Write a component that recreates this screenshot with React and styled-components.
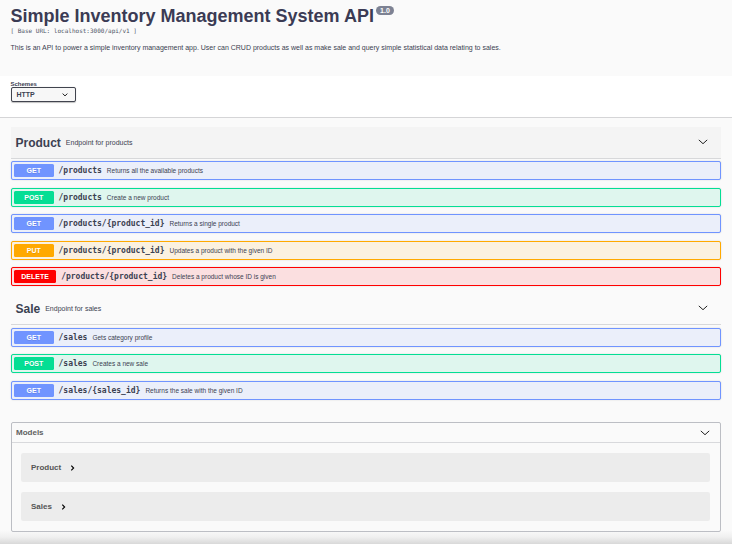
import React from "react";
import styled, { createGlobalStyle } from "styled-components";

const GlobalStyle = createGlobalStyle`
  * { box-sizing: border-box; }
  html, body { margin: 0; padding: 0; background: #fafafa; }
  body {
    font-family: "Liberation Sans", Arial, sans-serif;
    color: #3b4151;
    overflow: hidden;
  }
`;

const MONO = '"DejaVu Sans Mono", monospace';

const METHOD = {
  GET: { main: "#7094ff", fill: "#ebeffa" },
  POST: { main: "#04de94", fill: "#dff6ee" },
  PUT: { main: "#ffa900", fill: "#fbf1e0" },
  DELETE: { main: "#ff0000", fill: "#fbdfe0" },
};

const Page = styled.div`
  width: 732px;
  height: 544px;
  display: flex;
  flex-direction: column;
  overflow: hidden;
  background: linear-gradient(to bottom, #fafafa 530px, #f0f0f0 537px, #d8d8d8 544px);
`;

const Info = styled.header`
  height: 76px;
  padding: 6px 10.5px 0;
`;

const Title = styled.h1`
  display: flex;
  align-items: flex-start;
  margin: 0;
  font-size: 18px;
  line-height: 21px;
  font-weight: 700;
  color: #3b3b54;
  white-space: nowrap;
`;

const Version = styled.span`
  margin: 0 0 0 2px;
  width: 18px;
  height: 9px;
  border-radius: 5px;
  background: #7d8293;
  color: #fff;
  font-size: 7px;
  line-height: 9px;
  text-align: center;
`;

const BaseUrl = styled.div`
  font: 6px/8px ${MONO};
  color: #4f5566;
  white-space: pre;
`;

const Description = styled.p`
  margin: 8px 0 0;
  font-size: 7px;
  line-height: 9px;
`;

const SchemeBar = styled.section`
  height: 42px;
  padding: 5px 10.5px 0;
  background: #fff;
  border-bottom: 1px solid #d5d5d7;
`;

const SchemeLabel = styled.div`
  font-size: 6px;
  line-height: 6px;
  font-weight: 700;
`;

const SchemeSelect = styled.div`
  width: 65px;
  height: 15px;
  padding: 0 7px 0 5px;
  display: flex;
  align-items: center;
  justify-content: space-between;
  border: 1px solid #41444e;
  border-radius: 2px;
  background: #f7f7f7;
  box-shadow: 0 0.5px 1px rgba(0, 0, 0, 0.25);
  font-size: 7px;
  font-weight: 700;
`;

const TagGroup = styled.section`
  margin: ${(p) => p.$top}px 11px 0;
`;

const TagHeader = styled.div`
  height: 32px;
  display: flex;
  align-items: center;
  padding: 0 13px 0 4.5px;
  background: ${(p) => (p.$active ? "#f4f4f4" : "transparent")};
  border-bottom: 1px solid #d7d8da;
`;

const TagName = styled.h2`
  margin: 0;
  font-size: 12px;
  line-height: 14px;
`;

const TagNote = styled.span`
  flex: 1;
  padding-left: 5px;
  font-size: 7px;
`;

const Operations = styled.div`
  display: grid;
  padding-top: ${(p) => p.$top}px;
`;

const Operation = styled.div`
  height: 19px;
  display: flex;
  align-items: center;
  margin-bottom: ${(p) => p.$gap}px;
  padding: 0 2px;
  border: 1px solid ${(p) => METHOD[p.$method].main};
  border-radius: 2px;
  background: ${(p) => METHOD[p.$method].fill};
  box-shadow: 0 0 1.5px rgba(0, 0, 0, 0.19);
`;

const Method = styled.span`
  min-width: 39.5px;
  height: 13px;
  padding: 0 7.25px;
  border-radius: 1.5px;
  background: ${(p) => METHOD[p.$method].main};
  color: #fff;
  font-size: 7px;
  line-height: 13px;
  font-weight: 700;
  text-align: center;
  text-shadow: 0 0.5px 0 rgba(0, 0, 0, 0.1);
`;

const Path = styled.span`
  padding: 0 5px;
  font: 700 8px/10px ${MONO};
`;

const Summary = styled.span`
  font-size: 6.5px;
  line-height: 8px;
`;

const Models = styled.section`
  height: 110px;
  margin: 22px 11px 0;
  border: 1px solid #bcbec4;
  border-radius: 2px;
`;

const ModelsHeader = styled.div`
  height: 20px;
  display: flex;
  align-items: center;
  justify-content: space-between;
  padding: 0 10px 0 4px;
  border-bottom: 1px solid #d8d9dc;
  color: #606060;
  font-size: 8px;
  font-weight: 700;
`;

const ModelList = styled.div`
  display: flex;
  flex-direction: column;
  gap: 10px;
  padding: 10px 10px 0 9px;
`;

const Model = styled.div`
  height: 29px;
  display: flex;
  align-items: center;
  gap: 9px;
  padding-left: 10px;
  border-radius: 2px;
  background: #ececec;
  color: #555;
  font-size: 8px;
  font-weight: 700;
`;

const Icon = styled.svg`
  display: block;
  flex: none;
  margin: ${(p) => p.$margin || 0};
  fill: none;
  stroke: ${(p) => p.$color || "#222"};
  stroke-width: ${(p) => p.$weight || 1};
`;

const Chevron = ({ margin }) => (
  <Icon width="10" height="6" viewBox="0 0 10 6" $margin={margin}>
    <path d="M.8.9 5 4.7 9.2.9" />
  </Icon>
);

const SelectArrow = () => (
  <Icon width="6" height="4" viewBox="0 0 6 4" $margin="1px 0 0">
    <path d="M.6.6 3 2.9 5.4.6" />
  </Icon>
);

const ModelArrow = () => (
  <Icon width="5" height="6" viewBox="0 0 5 6" $color="#000" $weight={1.15} $margin="1px 0 0">
    <path d="M1.3 .7 3.6 3 1.3 5.3" />
  </Icon>
);

const TAGS = [
  {
    name: "Product",
    note: "Endpoint for products",
    active: true,
    top: 9,
    listTop: 2,
    operations: [
      ["GET", "/products", "Returns all the available products", 8],
      ["POST", "/products", "Create a new product", 7],
      ["GET", "/products/{product_id}", "Returns a single product", 8],
      ["PUT", "/products/{product_id}", "Updates a product with the given ID", 7],
      ["DELETE", "/products/{product_id}", "Deletes a product whose ID is given", 0],
    ],
  },
  {
    name: "Sale",
    note: "Endpoint for sales",
    active: false,
    top: 7,
    listTop: 3,
    operations: [
      ["GET", "/sales", "Gets category profile", 7],
      ["POST", "/sales", "Creates a new sale", 8],
      ["GET", "/sales/{sales_id}", "Returns the sale with the given ID", 0],
    ],
  },
];

export default function App() {
  return (
    <>
      <GlobalStyle />
      <Page>
        <Info>
          <Title>
            Simple Inventory Management System API
            <Version>1.0</Version>
          </Title>
          <BaseUrl>[ Base URL: localhost:3000/api/v1 ]</BaseUrl>
          <Description>
            This is an API to power a simple inventory management app. User can CRUD products as
            well as make sale and query simple statistical data relating to sales.
          </Description>
        </Info>
        <SchemeBar>
          <SchemeLabel>Schemes</SchemeLabel>
          <SchemeSelect>
            HTTP
            <SelectArrow />
          </SchemeSelect>
        </SchemeBar>
        {TAGS.map((tag) => (
          <TagGroup key={tag.name} $top={tag.top}>
            <TagHeader $active={tag.active}>
              <TagName>{tag.name}</TagName>
              <TagNote>{tag.note}</TagNote>
              <Chevron margin="0 0 2px" />
            </TagHeader>
            <Operations $top={tag.listTop}>
              {tag.operations.map(([method, path, summary, gap]) => (
                <Operation key={method + path} $method={method} $gap={gap}>
                  <Method $method={method}>{method}</Method>
                  <Path>{path}</Path>
                  <Summary>{summary}</Summary>
                </Operation>
              ))}
            </Operations>
          </TagGroup>
        ))}
        <Models>
          <ModelsHeader>
            Models
            <Chevron margin="1px 0 0" />
          </ModelsHeader>
          <ModelList>
            {["Product", "Sales"].map((name) => (
              <Model key={name}>
                {name}
                <ModelArrow />
              </Model>
            ))}
          </ModelList>
        </Models>
      </Page>
    </>
  );
}
